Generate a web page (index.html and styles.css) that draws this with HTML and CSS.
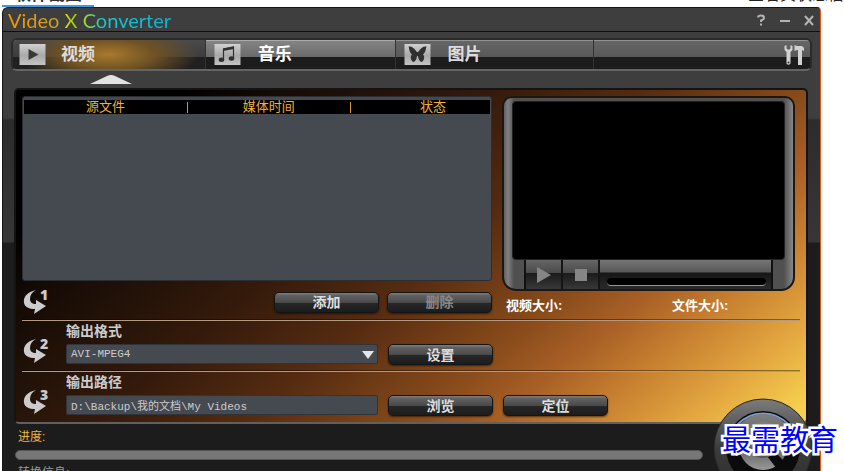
FILE: index.html
```html
<!DOCTYPE html>
<html lang="zh-CN">
<head>
<meta charset="utf-8">
<title>Video X Converter</title>
<link rel="stylesheet" href="styles.css">
</head>
<body>
<div class="page-strip">
  <h2 class="page-heading">软件截图</h2>
  <a class="page-link" href="#">查看其状态信</a>
</div>

<main class="window">
  <header class="titlebar">
    <h1 class="brand"><span class="brand-video">Video</span> <span class="brand-x">X</span> <span class="brand-conv">Converter</span></h1>
    <div class="window-controls">
      <button type="button" class="win-btn" aria-label="帮助"><svg viewBox="0 0 12 12"><path d="M3 3.500Q3 1.500 6 1.500T9 4Q9 5.500 6 6.500V8M6 9.500V11.500"/></svg></button>
      <button type="button" class="win-btn" aria-label="最小化"><svg viewBox="0 0 12 12"><path d="M1 7H11"/></svg></button>
      <button type="button" class="win-btn" aria-label="关闭"><svg viewBox="0 0 12 12"><path d="M2 2L10 11M10 2L2 11"/></svg></button>
    </div>
  </header>

  <nav class="tabs">
    <button type="button" class="tab tab-active">
      <svg class="tab-icon" viewBox="0 0 26 21"><rect width="26" height="21" fill="url(#tile)"/><path d="M9 5V16L19 10.500Z" fill="#393939"/></svg>
      <span>视频</span>
    </button>
    <button type="button" class="tab tab-hover">
      <svg class="tab-icon" viewBox="0 0 26 21"><rect width="26" height="21" fill="url(#tile)"/><path d="M9 15V5L19 3V14" fill="none" stroke="#303030" stroke-width="1.200"/><path d="M8.500 4.500L19.500 2.500V5L8.500 7Z" fill="#303030"/><ellipse cx="7" cy="15.800" rx="2.800" ry="2.200" fill="#303030"/><ellipse cx="17" cy="14.500" rx="2.800" ry="2.200" fill="#303030"/></svg>
      <span>音乐</span>
    </button>
    <button type="button" class="tab">
      <svg class="tab-icon" viewBox="0 0 26 21"><rect width="26" height="21" fill="url(#tile)"/><path d="M12.300 8C10 4 7 2 4 2.500C5 5 4.500 8 7.500 10.500C5.500 12 6 17 9 18C11 17.500 12 15 12.500 12H13.500C14 15 15 17.500 17 18C20 17 20.500 12 18.500 10.500C21.500 8 21 5 22 2.500C19 2 16 4 13.700 8Z" fill="#303030"/></svg>
      <span>图片</span>
    </button>
    <div class="tab-rest">
      <button type="button" class="tools" aria-label="工具">
        <svg viewBox="0 0 20 22"><path d="M2.500 1L0.500 2V6L2.500 8V19.500Q4.500 22 6.500 19.500V8L8.500 6V2L6.500 1V4.500L5.500 5.500H3.500L2.500 4.500Z" fill="#d2d2d2"/><circle cx="4.500" cy="18.500" r="1" fill="#333"/><path d="M10.500 1L13 2H18L20 4V7L18 6V21H14V6H13L10.500 7Z" fill="#d2d2d2"/></svg>
      </button>
    </div>
  </nav>
  <svg class="tab-pointer" viewBox="0 0 42 9"><path d="M0 9L17 1Q21 -1 25 1L42 9Z" fill="#e2e2e2"/></svg>

  <section class="panel">
    <div class="top-row">
      <div class="queue">
        <div class="queue-list">
          <table class="files">
            <thead><tr><th class="col-file">源文件</th><th class="col-time">媒体时间</th><th class="col-state">状态</th></tr></thead>
          </table>
        </div>
        <div class="queue-actions">
          <svg class="step" viewBox="0 0 26 26"><use href="#step-arrow"/><text x="16" y="11">1</text></svg>
          <button type="button" class="btn push">添加</button>
          <button type="button" class="btn" disabled>删除</button>
        </div>
      </div>
      <div class="preview">
        <div class="player">
          <div class="screen"></div>
          <div class="controls">
            <button type="button" class="ctl" aria-label="播放"><svg viewBox="0 0 16 18"><path d="M1 1V17L15 9Z"/></svg></button>
            <button type="button" class="ctl" aria-label="停止"><svg viewBox="0 0 16 18"><path d="M2 3H14V15H2Z"/></svg></button>
            <div class="seek"><div class="seek-track"></div></div>
          </div>
        </div>
        <div class="sizes"><span>视频大小:</span><span>文件大小:</span></div>
      </div>
    </div>

    <div class="row">
      <svg class="step" viewBox="0 0 26 26"><use href="#step-arrow"/><text x="16" y="11">2</text></svg>
      <div class="row-body">
        <label class="row-label" for="format">输出格式</label>
        <div class="row-fields">
          <div class="select-wrap">
            <select id="format" class="field"><option>AVI-MPEG4</option></select>
            <svg class="caret" viewBox="0 0 12 8"><path d="M0 0H12L6 8Z" fill="#e6e6e6"/></svg>
          </div>
          <button type="button" class="btn">设置</button>
        </div>
      </div>
    </div>

    <div class="row">
      <svg class="step" viewBox="0 0 26 26"><use href="#step-arrow"/><text x="16" y="11">3</text></svg>
      <div class="row-body">
        <label class="row-label" for="path">输出路径</label>
        <div class="row-fields">
          <input id="path" class="field" type="text" value="D:\Backup\我的文档\My Videos">
          <button type="button" class="btn">浏览</button>
          <button type="button" class="btn">定位</button>
        </div>
      </div>
    </div>
  </section>

  <footer class="status">
    <div class="status-main">
      <p class="progress-label">进度:</p>
      <div class="progress"></div>
      <p class="info-label">转换信息:</p>
    </div>
    <button type="button" class="start" aria-label="开始转换">
      <svg viewBox="0 0 100 100">
        <circle cx="50" cy="50" r="49" fill="url(#ring)" stroke="#262626"/>
        <circle cx="50" cy="50" r="37" fill="#0b0b0b"/>
        <path d="M24 27A35 35 0 0 1 76 27" fill="none" stroke="#7d9bd0" stroke-width="2"/>
        <circle cx="50" cy="48" r="32" fill="url(#dial)"/>
        <path d="M18 54Q22 84 50 86Q78 84 82 54L74 52L66 62H34L26 52Z" fill="#0b0b0b"/>
        <circle cx="50" cy="48" r="24" fill="url(#dial)"/>
        <path d="M54 58L64 71L71 63L62 54Z" fill="#0b0b0b"/>
        <circle cx="50" cy="46" r="13" fill="#777" stroke="#555" stroke-width="2"/>
      </svg>
    </button>
  </footer>
  <div class="watermark">最需教育</div>
</main>

<svg class="defs" aria-hidden="true">
  <defs>
    <linearGradient id="tile" x1="0" y1="0" x2="0" y2="1"><stop offset="0" stop-color="#d0d0d0"/><stop offset=".55" stop-color="#a9a9a9"/><stop offset="1" stop-color="#c4c4c4"/></linearGradient>
    <linearGradient id="ring" x1="0" y1="0" x2="0" y2="1"><stop offset="0" stop-color="#7c7c7c"/><stop offset=".5" stop-color="#3c3c3c"/><stop offset="1" stop-color="#2a2a2a"/></linearGradient>
    <linearGradient id="dial" x1="0" y1="0" x2="0" y2="1"><stop offset="0" stop-color="#808080"/><stop offset=".5" stop-color="#5a5a5a"/><stop offset="1" stop-color="#999"/></linearGradient>
    <path id="step-arrow" d="M12 1C3 3 -1 8 0 14C1 18 5 20 11 20L10 25L22 17L12 11L12 15C8 15 6 13 6 10C6 6 8 3 12 1Z"/>
  </defs>
</svg>
</body>
</html>
```
FILE: styles.css
```css
* { box-sizing: border-box; }

body {
  display: flex;
  flex-direction: column;
  margin: 0;
  height: 100vh;
  overflow: hidden;
  background: #fff;
  font: 12px/16px "Liberation Sans", "Noto Sans CJK SC", sans-serif;
  color: #ccc;
}

h1, h2, p { margin: 0; }
button { padding: 0; border: 0; background: none; font: inherit; color: inherit; }
svg { display: block; }
.defs { position: absolute; width: 0; height: 0; }

/* Strip of the surrounding page above the window */
.page-strip {
  display: flex;
  flex: none;
  justify-content: space-between;
  align-items: flex-end;
  height: 7px;
  overflow: hidden;
  padding-left: 2px;
}
.page-heading {
  width: 92px;
  border-bottom: 2px solid #3a9be8;
  font-size: 17px;
  line-height: 20px;
  text-align: center;
  color: #333;
}
.page-link {
  padding-bottom: 2px;
  font-size: 16px;
  line-height: 20px;
  color: #222;
  text-decoration: none;
}

/* Application window */
.window {
  position: relative;
  display: flex;
  flex: 1;
  flex-direction: column;
  min-height: 0;
  margin: 0 23px 0 2px;
  border-top: 1px solid #161616;
  border-left: 1px solid #161616;
  border-right: 1px solid #e85a1a;
  border-radius: 6px 4px 0 0;
  background: linear-gradient(#3e3e3e 0 110px, #2c2c2c 112px, #363636 234px, #1c1c1c 235px);
}

.titlebar {
  display: flex;
  flex: none;
  justify-content: space-between;
  align-items: center;
  height: 24px;
  padding: 0 5px;
  border-bottom: 1px solid #111;
}
.brand {
  font: 400 20px/24px Lato, sans-serif;
}
.brand span { background-clip: text; -webkit-background-clip: text; color: transparent; }
.brand-video { background-image: linear-gradient(90deg, #f39800, #c9a032); }
.brand-x { background-image: linear-gradient(90deg, #d8dc10, #8cc81c); }
.brand-conv { background-image: linear-gradient(90deg, #9ee020, #14c6d8 20px, #10b4d0); }
.window-controls { display: flex; gap: 12px; }
.win-btn svg { width: 12px; height: 12px; fill: none; stroke: #b4b4b4; stroke-width: 2; }

/* Tabs */
.tabs {
  display: grid;
  flex: none;
  grid-template-columns: 193fr 190fr 199fr 216fr;
  height: 33px;
  margin: 6px 8px 0;
  border: 2px solid #2a2a2a;
  border-bottom-color: #646464;
  border-radius: 6px;
  background: linear-gradient(#929292 0 1px, #666 1px, #585858 17px, #1c1c1c 17px);
  overflow: hidden;
}
.tab {
  display: flex;
  align-items: center;
  gap: 17px;
  padding-left: 8px;
  border-right: 1px solid #333;
  font-size: 17px;
  font-weight: 700;
  color: #ddd;
}
.tab-active {
  gap: 15px;
  padding-left: 6px;
  background: radial-gradient(ellipse 90px 30px at 50% 50%, #a87a2c, #6f5224 50%, transparent), linear-gradient(#4a4a4a, #3c3c3c 17px, #202020 17px);
}
.tab-hover { background: linear-gradient(#aaa 0 1px, #848484 1px, #6a6a6a 17px, #1c1c1c 17px); color: #fff; }
.tab-icon { width: 27px; height: 21px; }
.tab-rest { display: flex; justify-content: flex-end; align-items: center; padding-right: 6px; }
.tools svg { width: 20px; height: 22px; }
.tab-pointer { flex: none; width: 42px; height: 9px; margin: 4px 0 4px 87px; }

/* Main panel */
.panel {
  flex: none;
  margin: 0 12px 0 11px;
  padding: 6px 6px 0;
  border: 2px solid #141414;
  border-bottom-color: #606060;
  border-radius: 5px;
  background: linear-gradient(140deg, #000 14%, #140b05 22%, #341a0b 40%, #562c11 53%, #8a4c1b 67%, #a96026 74%, #ca8331 82%, #e3a740 90%, #f6cf4e 98%);
}
.top-row { display: flex; gap: 10px; }
.queue { flex: 1; min-width: 0; }
.queue-list {
  height: 185px;
  padding: 3px 1px;
  border: 1px solid #2b2f34;
  border-radius: 3px;
  background: #454a51;
}
.files {
  width: 100%;
  table-layout: fixed;
  border-collapse: collapse;
  background: #000;
  color: #f0b03c;
}
.files th {
  position: relative;
  height: 14px;
  padding: 0;
  font-size: 13px;
  font-weight: 400;
  line-height: 14px;
}
.files th + th::before {
  content: "";
  position: absolute;
  left: 0;
  top: 2px;
  width: 1px;
  height: 11px;
  background: #d89828;
}
.col-time { width: 35%; }
.files .col-state { width: 30%; padding-left: 26px; }
.queue-actions { display: flex; align-items: center; gap: 8px; height: 39px; padding-top: 3px; }
.push { margin-left: auto; }

.step { flex: none; width: 26px; height: 26px; margin-left: 2px; overflow: visible; fill: #ccc; }
.step text { font: 900 14px "Open Sans", sans-serif; }

.btn {
  flex: none;
  width: 105px;
  height: 21px;
  border: 1px solid #151515;
  border-radius: 5px;
  background: linear-gradient(#787878 0 1px, #626262 2px, #484848 10px, #272727 10px, #1c1c1c);
  box-shadow: 0 1px 2px #0008;
  font-size: 14px;
  font-weight: 700;
  line-height: 18px;
  color: #ddd;
}
.btn:disabled { color: #888; }

.preview { flex: 0 0 298px; }
.player {
  width: 293px;
  height: 195px;
  padding: 3px 8px 0;
  border: 2px solid #1c1712;
  border-radius: 10px 10px 14px 14px;
  background: linear-gradient(90deg, #606060, #808080 4px, #505050 10px, #505050 280px, #888);
}
.screen { height: 159px; border: 1px solid #222; border-radius: 4px; background: #000; }
.controls {
  display: flex;
  height: 29px;
  margin: 0 12px;
  border: solid #111;
  border-width: 0 2px;
}
.ctl {
  display: flex;
  align-items: center;
  justify-content: center;
  width: 37px;
  border-right: 2px solid #151515;
  background: linear-gradient(#666, #4a4a4a 13px, #1a1a1a 13px, #383838);
}
.ctl svg { width: 16px; height: 18px; fill: #858585; }
.seek { flex: 1; padding: 18px 5px 0 7px; background: linear-gradient(#767676, #585858 12px, #161616 13px, #2a2a2a); }
.seek-track { height: 8px; border-bottom: 1px solid #999; border-radius: 4px; background: #000; }
.sizes {
  display: grid;
  grid-template-columns: 166px 1fr;
  padding: 7px 4px 0;
  font-size: 13px;
  font-weight: 700;
  color: #fff;
}

/* Output rows */
.row {
  display: flex;
  gap: 16px;
  height: 51px;
  border-top: 1px solid #b59a82;
  box-shadow: 0 -1px #0006;
}
.row .step { margin-top: 17px; }
.row-body { flex: 1; min-width: 0; }
.row-label { display: block; width: max-content; padding-top: 1px; font-size: 14px; font-weight: 700; line-height: 18px; color: #ccc; }
.row-fields { display: flex; gap: 10px; margin-top: 4px; }
.select-wrap { position: relative; }
.field {
  display: block;
  width: 312px;
  height: 20px;
  padding: 0 4px;
  border: 1px solid #30343a;
  border-radius: 2px;
  background: #454a51;
  font: 11px/18px "Liberation Mono", "Noto Sans CJK SC", monospace;
  color: #ccc;
  appearance: none;
}
.caret { position: absolute; right: 4px; top: 7px; width: 12px; height: 8px; pointer-events: none; }

/* Status area */
.status { display: flex; flex: 1; min-height: 0; padding: 0 7px 0 12px; }
.status-main { flex: 1; }
.progress-label { padding: 5px 3px 0; color: #f0b43c; }
.progress { height: 10px; margin-top: 5px; border: 1px solid #555; border-radius: 5px; background: #777; }
.info-label { padding: 5px 3px 0; color: #999; }
.start { flex: none; width: 100px; height: 100px; margin: -26px 0 0 10px; }
.start svg { width: 100px; height: 100px; }

.watermark {
  position: absolute;
  right: -18px;
  top: 412px;
  font: 29px/36px "Noto Sans CJK SC", sans-serif;
  color: #00f;
  -webkit-text-stroke: 5px #fff;
  paint-order: stroke fill;
}
```
